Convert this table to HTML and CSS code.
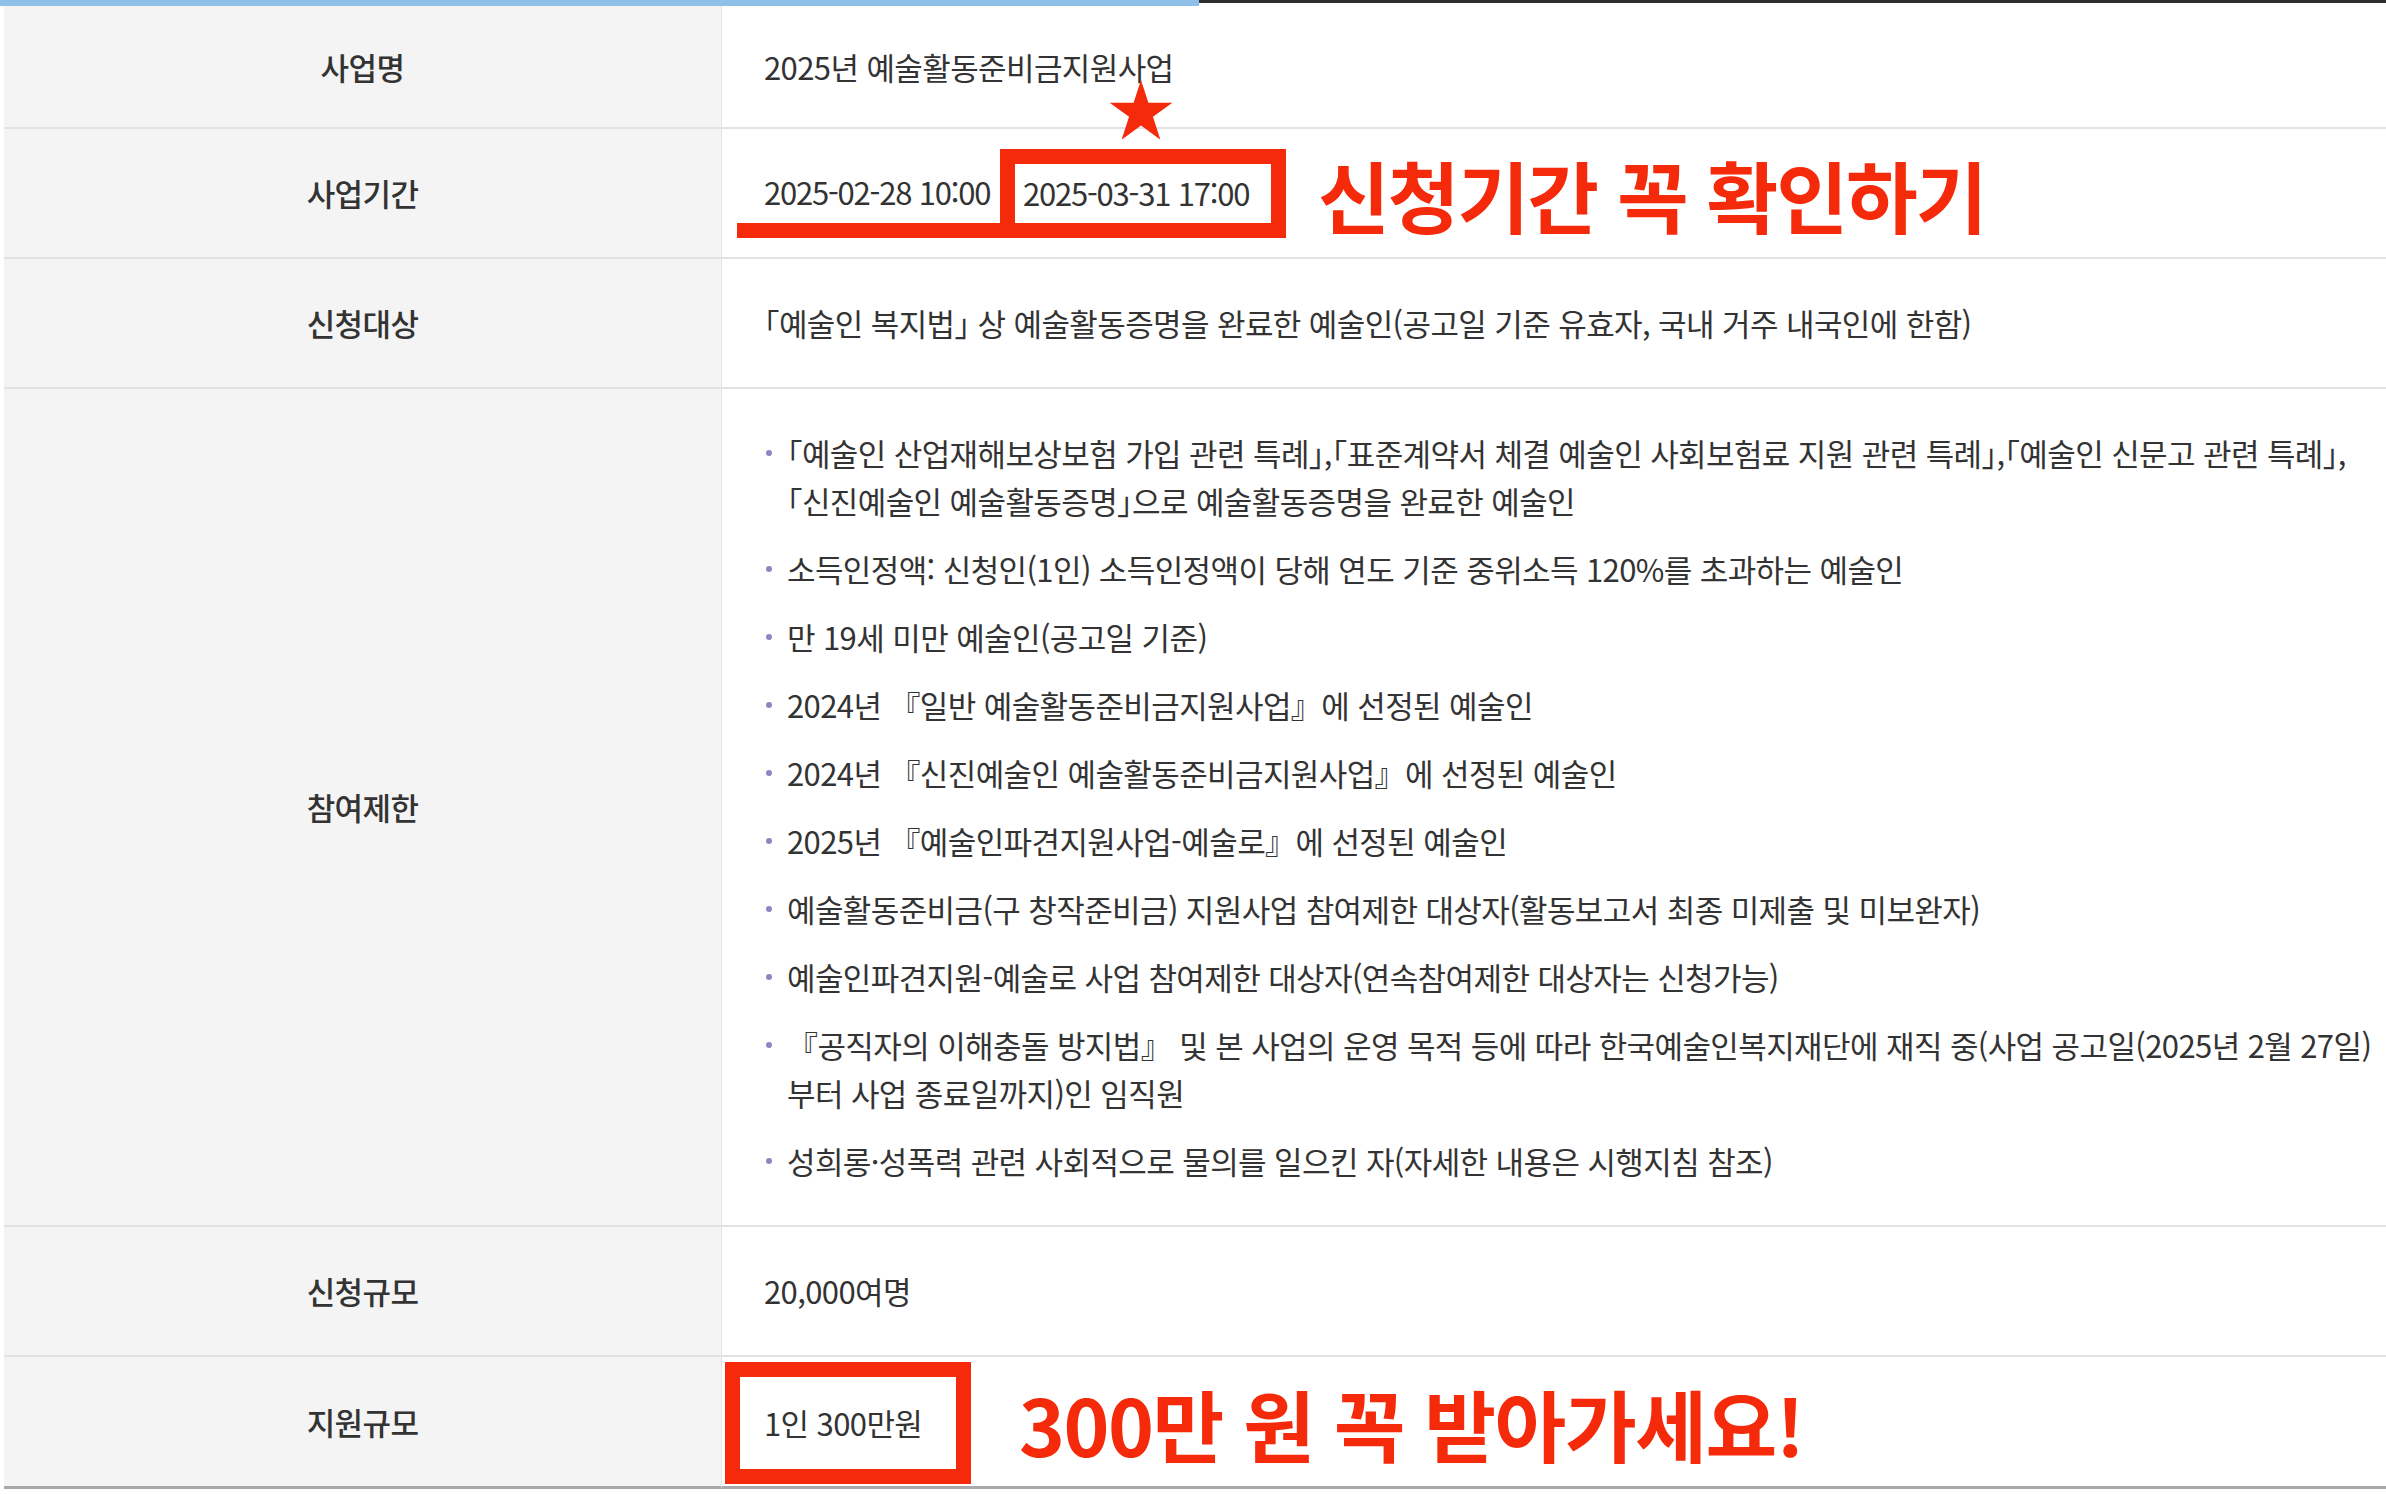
FILE: index.html
```html
<!DOCTYPE html>
<html lang="ko">
<head>
  <meta charset="UTF-8" />
  <meta name="viewport" content="width=device-width, initial-scale=1.0"/>
  <title>2025년 예술활동준비금지원사업</title>
  <link rel="stylesheet" href="styles.css">
</head>
<body>

<!-- 상단 탭 진행 표시줄 -->
<div class="topbar">
  <div class="topbar-fill"></div>
  <div class="topbar-rest"></div>
</div>

<!-- 사업 개요 표 -->
<table class="info">
  <tr class="row-name">
    <th>사업명</th>
    <td>2025년 예술활동준비금지원사업</td>
  </tr>
  <tr class="row-period">
    <th>사업기간</th>
    <td>
      <div class="period">
        <span class="date-start">2025-02-28 10:00</span>
        <span class="date-end">2025-03-31 17:00
          <svg class="star" viewBox="0 0 100 91"><polygon points="50,0 61.23,34.55 97.55,34.55 68.17,55.9 79.39,90.45 50,69.1 20.61,90.45 31.83,55.9 2.45,34.55 38.77,34.55"/></svg>
        </span>
        <span class="note">신청기간 꼭 확인하기</span>
      </div>
    </td>
  </tr>
  <tr>
    <th>신청대상</th>
    <td class="tight">「예술인 복지법」 상 예술활동증명을 완료한 예술인(공고일 기준 유효자, 국내 거주 내국인에 한함)</td>
  </tr>
  <tr>
    <th>참여제한</th>
    <td>
      <ul class="limits">
        <li class="tight"><span>「예술인 산업재해보상보험 가입 관련 특례」,「표준계약서 체결 예술인 사회보험료 지원 관련 특례」,「예술인 신문고 관련 특례」,<br>「신진예술인 예술활동증명」으로 예술활동증명을 완료한 예술인</span></li>
        <li><span>소득인정액: 신청인(1인) 소득인정액이 당해 연도 기준 중위소득 120%를 초과하는 예술인</span></li>
        <li><span>만 19세 미만 예술인(공고일 기준)</span></li>
        <li><span>2024년 『일반 예술활동준비금지원사업』에 선정된 예술인</span></li>
        <li><span>2024년 『신진예술인 예술활동준비금지원사업』에 선정된 예술인</span></li>
        <li><span>2025년 『예술인파견지원사업-예술로』에 선정된 예술인</span></li>
        <li><span>예술활동준비금(구 창작준비금) 지원사업 참여제한 대상자(활동보고서 최종 미제출 및 미보완자)</span></li>
        <li><span>예술인파견지원-예술로 사업 참여제한 대상자(연속참여제한 대상자는 신청가능)</span></li>
        <li><span>『공직자의 이해충돌 방지법』 및 본 사업의 운영 목적 등에 따라 한국예술인복지재단에 재직 중(사업 공고일(2025년 2월 27일)<br>부터 사업 종료일까지)인 임직원</span></li>
        <li><span>성희롱·성폭력 관련 사회적으로 물의를 일으킨 자(자세한 내용은 시행지침 참조)</span></li>
      </ul>
    </td>
  </tr>
  <tr>
    <th>신청규모</th>
    <td>20,000여명</td>
  </tr>
  <tr class="row-amount">
    <th>지원규모</th>
    <td>
      <div class="amount">
        <span class="amount-box">1인 300만원</span>
        <span class="note">300만 원 꼭 받아가세요!</span>
      </div>
    </td>
  </tr>
</table>

</body>
</html>
```

FILE: styles.css
```css
body {
  margin: 0;
  background: #fff;
  font-family: "Noto Sans CJK KR", "Noto Sans", sans-serif;
  color: #333;
}

/* 상단 표시줄 */
.topbar {
  display: flex;
  align-items: flex-start;
  height: 6px;
}
.topbar-fill {
  width: 1199px;
  height: 6px;
  background: #8fc0e9;
}
.topbar-rest {
  flex: 1;
  height: 3px;
  background: #2e2e2e;
}

/* 표 */
.info {
  width: calc(100% - 4px);
  margin-left: 4px;
  border-collapse: separate;
  border-spacing: 0;
  font-size: 31px;
  line-height: 48px;
  letter-spacing: -0.6px;
}
.info th {
  width: 717px;
  padding: 0;
  background: #f4f4f4;
  border-right: 1px solid #e5e5e5;
  border-bottom: 2px solid #e2e2e2;
  font-weight: 500;
  color: #333;
  text-align: center;
}
.info td {
  padding: 40px 0 40px 42px;
  border-bottom: 2px solid #e2e2e2;
  text-align: left;
  vertical-align: middle;
}
/* 「」 괄호는 반각으로 */
.tight {
  font-feature-settings: "halt";
}
.row-name td {
  padding-top: 37px;
  padding-bottom: 36px;
}
.row-period td {
  padding-top: 20px;
  padding-bottom: 19px;
}
.row-amount th,
.row-amount td {
  border-bottom: 3px solid #a8a8a8;
}
.row-amount td {
  padding: 5px 0 2px 3px;
}

/* 사업기간 강조 */
.period {
  display: flex;
  align-items: flex-end;
}
.date-start {
  width: 263px;
  box-sizing: border-box;
  margin-left: -27px;
  padding: 0 0 7px 27px;
  border-bottom: 15px solid #f42a0b;
  letter-spacing: -1.2px;
  white-space: nowrap;
}
.date-end {
  position: relative;
  width: 286px;
  box-sizing: border-box;
  padding: 5px 8px 6px;
  border: 15px solid #f42a0b;
  letter-spacing: -1.2px;
  white-space: nowrap;
}
.star {
  position: absolute;
  left: 93px;
  top: -84px;
  width: 66px;
  height: 60px;
  fill: #f42a0b;
}
.note {
  align-self: center;
  margin-left: 32px;
  font-size: 78px;
  font-weight: 700;
  line-height: 1;
  letter-spacing: -2px;
  color: #f42a0b;
  white-space: nowrap;
}

/* 참여제한 목록 */
.limits {
  margin: 0;
  padding: 0;
  list-style: none;
}
.limits li {
  display: flex;
}
.limits li + li {
  margin-top: 20px;
}
.limits li::before {
  content: "";
  flex: 0 0 6px;
  height: 6px;
  margin: 21px 15px 0 2px;
  border-radius: 50%;
  background: #8a87c2;
}

/* 지원규모 강조 */
.amount {
  display: flex;
  align-items: center;
}
.amount-box {
  display: flex;
  align-items: center;
  width: 246px;
  height: 122px;
  box-sizing: border-box;
  padding-left: 24px;
  border: 15px solid #f42a0b;
  white-space: nowrap;
}
.amount .note {
  margin-left: 48px;
  letter-spacing: -1.5px;
}
```
